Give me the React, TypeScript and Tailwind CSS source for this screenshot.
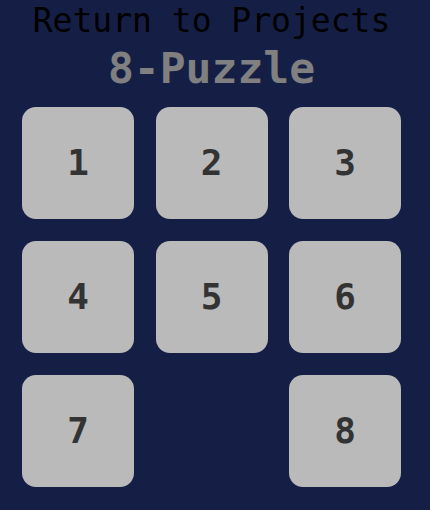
import React, { useState } from "react";

const solved = [1, 2, 3, 4, 5, 6, 7, 0, 8];

export default function App() {
  const [tiles, setTiles] = useState<number[]>(solved);

  const move = (i: number) => {
    const empty = tiles.indexOf(0);
    const r1 = Math.floor(i / 3), c1 = i % 3;
    const r2 = Math.floor(empty / 3), c2 = empty % 3;
    if (Math.abs(r1 - r2) + Math.abs(c1 - c2) !== 1) return;
    const next = [...tiles];
    next[empty] = tiles[i];
    next[i] = 0;
    setTiles(next);
  };

  return (
    <div className="w-[430px] h-[510px] bg-[#151f46] pr-[7px] flex flex-col items-center font-['DejaVu_Sans_Mono',monospace] overflow-hidden">
      <a href="#" className="text-[33px] leading-[40px] text-black mt-[1px]">
        Return to Projects
      </a>
      <h1 className="text-[43px] leading-[52px] font-bold text-[#808080] mt-[1px]">
        8-Puzzle
      </h1>
      {/* Board */}
      <div className="grid grid-cols-[112px_112px_112px] gap-x-[21.5px] gap-y-[22px] mt-[13px]">
        {tiles.map((t, i) =>
          t === 0 ? (
            <div key={i} className="w-[112px] h-[112px]" />
          ) : (
            <button
              key={i}
              onClick={() => move(i)}
              className="w-[112px] h-[112px] rounded-[14px] bg-[#bababa] text-[#333333] text-[36px] font-bold flex items-center justify-center"
            >
              {t}
            </button>
          )
        )}
      </div>
    </div>
  );
}
